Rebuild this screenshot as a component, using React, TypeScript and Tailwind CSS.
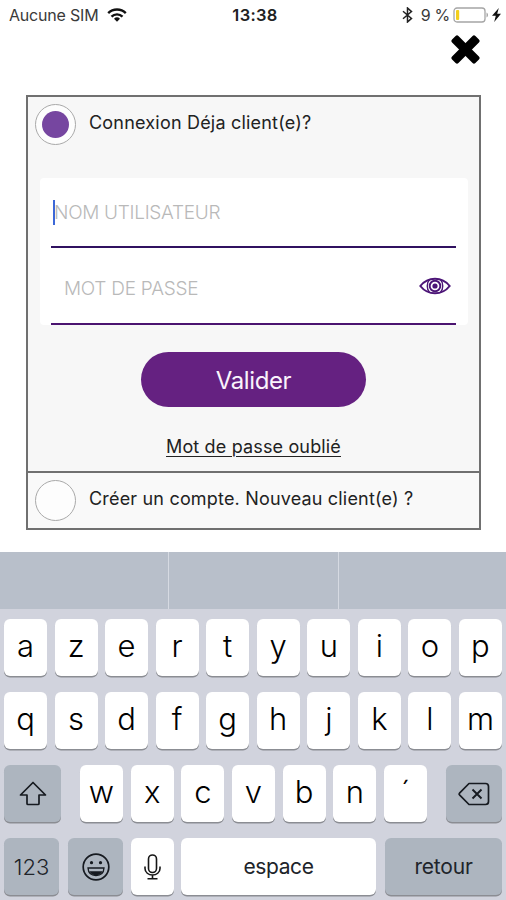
import React from "react";

const CAP = "flex h-[57px] items-center justify-center rounded-[6px] shadow-[0_1.5px_0_#8b8d93]";

function LetterKey({ label }: { label: string }) {
  return (
    <div className={`${CAP} w-[43px] shrink-0 bg-white pb-1 text-[31px] font-light leading-none text-black`}>
      {label}
    </div>
  );
}

function LetterRow({ letters }: { letters: string }) {
  return (
    <div className="flex justify-between">
      {letters.split("").map((l) => (
        <LetterKey key={l} label={l} />
      ))}
    </div>
  );
}

function Radio({ checked }: { checked?: boolean }) {
  return (
    <span className="flex size-[41px] shrink-0 items-center justify-center rounded-full border border-[#a9a9a9] bg-[#fdfdfd]">
      {checked && <span className="size-[27px] rounded-full bg-[#7646a0]" />}
    </span>
  );
}

function StatusBar() {
  return (
    <div className="flex h-[30px] items-center pl-[9px] pr-[5px] text-[#3a3a3a]">
      <div className="flex flex-1 items-center gap-[9px]">
        <span className="text-[16px] leading-none tracking-[-0.2px]">Aucune SIM</span>
        <svg width="20" height="14" viewBox="0 0 20 14" fill="none" stroke="#111" strokeWidth="2.4">
          <path d="M1.2 5.2a12.4 12.4 0 0 1 17.6 0" />
          <path d="M4.5 8.6a7.8 7.8 0 0 1 11 0" />
          <path d="M10 13.8 7 10.8a4.3 4.3 0 0 1 6 0Z" fill="#111" stroke="none" />
        </svg>
      </div>
      <span className="text-[16.5px] font-semibold leading-none tracking-[0.3px] text-[#222]">13:38</span>
      <div className="flex flex-1 items-center justify-end">
        <svg width="11" height="16" viewBox="0 0 11 16" fill="none" stroke="#222" strokeWidth="1.5">
          <path d="m1 4.2 8.5 7.2-4 3.6V1l4 3.6L1 11.8" />
        </svg>
        <span className="ml-[8px] whitespace-nowrap text-[16px] leading-none tracking-[-0.3px]">9 %</span>
        <svg className="ml-[3px]" width="36" height="16" viewBox="0 0 36 16">
          <rect x="1" y="1" width="31" height="14" rx="3" fill="white" stroke="#a5a5a5" strokeWidth="1.3" />
          <rect x="3" y="3" width="3.2" height="10" rx="1" fill="#f3cf1c" />
          <path d="M33.5 5.5c2 .8 2 4.2 0 5Z" fill="#a5a5a5" />
        </svg>
        <svg className="ml-[3px]" width="9" height="14" viewBox="0 0 9 14" fill="#111">
          <path d="M6.8 0 0 7.8h3.8L2.2 14 9 5.8H5.2Z" />
        </svg>
      </div>
    </div>
  );
}

function LoginCard() {
  return (
    <div className="ml-[26px] mt-[31px] flex h-[435px] w-[455px] flex-col border-2 border-[#707070] bg-[#f7f7f7]">
      <div className="flex h-[81px] items-start pl-[7px] pt-[7px]">
        <Radio checked />
        <span className="ml-[13px] mt-[8px] text-[18px] leading-[22px] tracking-[0.2px] text-[#222]">
          Connexion Déja client(e)?
        </span>
      </div>
      <div className="ml-[12px] h-[147px] w-[428px] rounded-[4px] bg-white pl-[11px]">
        <div className="flex h-[70px] w-[405px] items-center border-b-2 border-[#301160] pl-[2px]">
          <span className="h-[25px] w-[2px] bg-[#3c68d8]" />
          <span className="-ml-px text-[19px] font-light leading-none tracking-[-0.3px] text-[#b9b9b9]">
            NOM UTILISATEUR
          </span>
        </div>
        <div className="flex h-[77px] w-[405px] items-center justify-between border-b-2 border-[#4b1470] pl-[13px] pr-[5px]">
          <span className="pt-[6px] text-[19px] font-light leading-none tracking-[-0.25px] text-[#b9b9b9]">
            MOT DE PASSE
          </span>
          <svg width="32" height="20" viewBox="0 0 32 20" fill="none" stroke="#4c1577" strokeWidth="2">
            <path d="M1.3 10C9 .3 23 .3 30.7 10 23 19.700 9 19.700 1.3 10Z" />
            <path d="M10.500 3.500c-3 3.500-3 9.500 0 13M21.500 3.500c3 3.500 3 9.500 0 13" strokeWidth="1.400" />
            <circle cx="16" cy="10" r="5.300" strokeWidth="1.900" />
            <circle cx="16" cy="10" r="2.600" fill="#4c1577" stroke="none" />
          </svg>
        </div>
      </div>
      <div className="flex h-[148px] flex-col items-center border-b-2 border-[#707070] pt-[27px]">
        <div className="flex h-[55px] w-[225px] items-center justify-center rounded-full bg-[#652181] pt-[2px] text-[24px] leading-none tracking-[-0.4px] text-[#faf3fc]">
          Valider
        </div>
        <span className="mt-[29px] text-[18px] leading-[22px] tracking-[0.15px] text-[#222] underline decoration-1 underline-offset-[3px]">
          Mot de passe oublié
        </span>
      </div>
      <div className="flex flex-1 items-start bg-[#f9f9f9] pl-[7px] pt-[7px]">
        <Radio />
        <span className="ml-[13px] mt-[8px] text-[18px] leading-[22px] tracking-[0.18px] text-[#222]">
          Créer un compte. Nouveau client(e) ?
        </span>
      </div>
    </div>
  );
}

function Keyboard() {
  return (
    <div className="mt-[22px] flex h-[348px] flex-col bg-[#d1d3dd]">
      <div className="flex h-[57px] bg-[#b8bfca]">
        <div className="w-[169px] border-r border-[#d6dae2]" />
        <div className="w-[170px] border-r border-[#d6dae2]" />
      </div>
      <div className="flex flex-col gap-[16px] pl-[4px] pr-[4px] pt-[10px]">
        <LetterRow letters="azertyuiop" />
        <LetterRow letters="qsdfghjklm" />
        <div className="flex justify-between">
          <div className={`${CAP} w-[57px] bg-[#adb5bf]`}>
            <svg width="28" height="25" viewBox="0 0 28 25" fill="none" stroke="#161a20" strokeWidth="1.7" strokeLinejoin="round">
              <path d="M14 1.5 26.5 14H20v8.5a1 1 0 0 1-1 1H9a1 1 0 0 1-1-1V14H1.5Z" />
            </svg>
          </div>
          <div className="flex w-[347px] justify-between">
            {"wxcvbn´".split("").map((l) => (
              <LetterKey key={l} label={l} />
            ))}
          </div>
          <div className={`${CAP} w-[56px] bg-[#adb5bf]`}>
            <svg width="32" height="24" viewBox="0 0 32 24" fill="none" stroke="#161a20" strokeWidth="1.7" strokeLinejoin="round">
              <path d="M11 1.5h16.500a3 3 0 0 1 3 3v15a3 3 0 0 1-3 3H11L1.500 12.800a1.200 1.200 0 0 1 0-1.600Z" />
              <path d="m14.500 7.500 9 9m0-9-9 9" strokeWidth="1.9" />
            </svg>
          </div>
        </div>
        <div className="flex text-[22px] leading-none text-[#20242a]">
          <div className={`${CAP} w-[55px] bg-[#adb5bf] font-light`}>123</div>
          <div className={`${CAP} ml-[9px] w-[55px] bg-[#adb5bf]`}>
            <svg width="28" height="28" viewBox="0 0 28 28" fill="none" stroke="#161a20" strokeWidth="1.7">
              <circle cx="14" cy="14" r="12.800" />
              <circle cx="9.500" cy="9.700" r="1.600" fill="#161a20" stroke="none" />
              <circle cx="18.500" cy="9.700" r="1.600" fill="#161a20" stroke="none" />
              <path d="M6 15h16c-.3 5-3.500 7.500-8 7.500S6.300 20 6 15Z" strokeWidth="1.300" />
              <path d="M7.500 18.300h13c-1 2.700-3.500 4-6.500 4s-5.500-1.300-6.500-4Z" fill="#161a20" stroke="none" />
            </svg>
          </div>
          <div className={`${CAP} ml-[8px] w-[43px] bg-white`}>
            <svg width="17" height="26" viewBox="0 0 17 26" fill="none" stroke="#161616" strokeWidth="1.600">
              <rect x="4.500" y="1" width="8" height="17.500" rx="4" />
              <path d="M1 12.500v2c0 4 3.500 6.500 7.500 6.500s7.500-2.500 7.500-6.500v-2M8.500 21v3.500M3.500 24.800h10" />
            </svg>
          </div>
          <div className={`${CAP} ml-[7px] w-[195px] bg-white text-[21px] tracking-[-0.4px]`}>espace</div>
          <div className={`${CAP} ml-[9px] w-[117px] bg-[#adb5bf] text-[21px] tracking-[-0.2px]`}>retour</div>
        </div>
      </div>
    </div>
  );
}

export default function App() {
  return (
    <div className="h-[900px] w-[506px] overflow-hidden bg-white font-['Inter','Liberation_Sans',sans-serif]">
      <StatusBar />
      <div className="flex h-[34px] items-end justify-end pr-[26px]">
        <svg width="29" height="29" viewBox="0 0 29 29">
          <g transform="rotate(45 14.5 14.5)">
            <rect x="-2" y="10" width="33" height="9" rx="2" />
            <rect x="10" y="-2" width="9" height="33" rx="2" />
          </g>
        </svg>
      </div>
      <LoginCard />
      <Keyboard />
    </div>
  );
}
